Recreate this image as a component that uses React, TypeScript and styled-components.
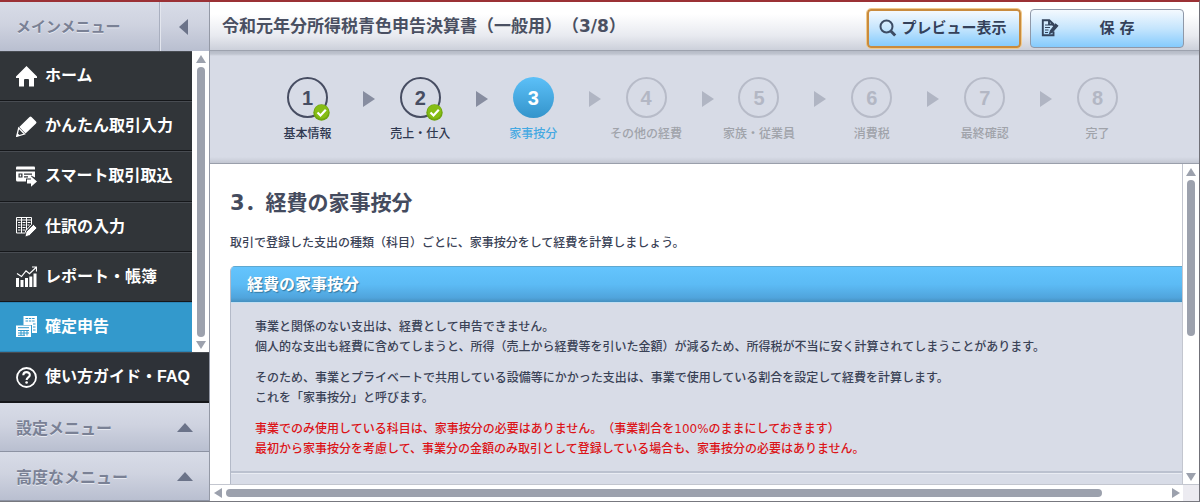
import React from "react";
import styled, { createGlobalStyle, css } from "styled-components";

const GlobalStyle = createGlobalStyle`
  *, *::before, *::after { box-sizing: border-box; }
  body {
    margin: 0;
    color: #3a4256;
    font-family: "DejaVu Sans", "Noto Sans CJK JP", sans-serif;
    font-size: 12px;
    font-weight: 500;
    text-spacing-trim: space-all;
  }
  h1, h2, h3, p, ul, ol { margin: 0; padding: 0; }
  ul, ol { list-style: none; }
  button { font-family: inherit; cursor: pointer; }
`;

const Page = styled.div`
  display: flex;
  height: 100vh;
  min-height: 480px;
  overflow: hidden;
  border-top: 2px solid #9b3135;
  border-right: 1px solid #707078;
  border-bottom: 1px solid #77787f;
`;

/* ---------- sidebar ---------- */

const Sidebar = styled.nav`
  display: flex;
  flex-direction: column;
  flex: none;
  width: 210px;
  border-right: 1px solid #9499a6;
`;

const silver = css`
  background: linear-gradient(#d8dce7, #cfd3e0 45%, #b9bfd0);
  color: #7a8195;
  font-family: "Noto Sans CJK JP", sans-serif;
  font-size: 16px;
  font-weight: 700;
  line-height: 24px;
  text-shadow: 0 1px 0 #e6e9f1;
`;

const SidebarHead = styled.div`
  ${silver}
  display: flex;
  flex: none;
  height: 49px;
`;

const SidebarTitle = styled.h2`
  display: flex;
  flex: 1;
  align-items: center;
  padding: 0 0 2px 16px;
  border-right: 1px solid #a9afbf;
  font-size: 15px;
`;

const CollapseButton = styled.button`
  display: flex;
  align-items: center;
  justify-content: center;
  width: 49px;
  padding: 0 4px 0 0;
  border: 0;
  border-left: 1px solid #e3e6ee;
  background: none;
`;

const MenuArea = styled.div`
  display: flex;
  flex: 1;
  min-height: 0;
`;

const MenuList = styled.ul`
  display: flex;
  flex: 1;
  flex-direction: column;
`;

const MenuItem = styled.li`
  display: flex;
  flex: 1;
`;

const MenuLink = styled.a<{ $active?: boolean; $tall?: boolean }>`
  display: flex;
  flex: 1;
  align-items: center;
  gap: 8px;
  padding-left: 16px;
  border-top: 1px solid ${(p) => (p.$active ? "#2c86b8" : "#484c52")};
  border-bottom: 1px solid ${(p) => (p.$active ? "#2b84b5" : "#15171a")};
  background: ${(p) => (p.$active ? "#3399cc" : p.$tall ? "#2e3238" : "#313539")};
  color: #fff;
  font-family: "Liberation Sans", "Noto Sans CJK JP", sans-serif;
  font-size: 16px;
  font-weight: 700;
  line-height: 24px;
  text-decoration: none;
  white-space: nowrap;
  ${(p) => p.$tall && "flex: none; height: 51px; border-bottom-width: 2px;"}
`;

const FoldButton = styled.button`
  ${silver}
  display: flex;
  flex: none;
  align-items: center;
  justify-content: space-between;
  height: 49px;
  padding: 0 16px;
  border: 0;
  border-bottom: 1px solid #8d93a3;
`;

/* ---------- scroll bars ---------- */

const VTrack = styled.div`
  display: flex;
  flex: none;
  flex-direction: column;
  align-items: center;
  gap: 4px;
  width: 17px;
  padding: 4px 0 3px;
  border-left: 1px solid #fff;
  background: #fff;
`;

const ContentVTrack = styled(VTrack)`
  border-left-color: #c3c6cf;
`;

const VRail = styled.div`
  flex: 1;
  width: 8px;
`;

const VThumb = styled.div<{ $share: number }>`
  height: ${(p) => p.$share}%;
  border-radius: 4px;
  background: #9ca1ad;
`;

const HTrack = styled.div`
  display: flex;
  flex: 1;
  align-items: center;
  gap: 4px;
  padding: 0 3px 0 4px;
  background: #fff;
`;

const HRail = styled.div`
  flex: 1;
`;

const HThumb = styled.div<{ $share: number }>`
  width: ${(p) => p.$share}%;
  height: 8px;
  border-radius: 4px;
  background: #9ca1ad;
`;

const HRow = styled.div`
  display: flex;
  flex: none;
  height: 17px;
  border-top: 1px solid #c3c6cf;
`;

const Corner = styled.div`
  width: 16px;
  background: #ecebf1;
`;

/* ---------- main column ---------- */

const Main = styled.main`
  display: flex;
  flex: 1;
  flex-direction: column;
  min-width: 0;
`;

const TitleBar = styled.header`
  display: flex;
  flex: none;
  align-items: center;
  justify-content: space-between;
  height: 49px;
  padding: 0 15px 0 12px;
  border-bottom: 1px solid #9da2ae;
  background: linear-gradient(#fff 25%, #e8eaf0 70%, #ccd0da);
`;

const PageTitle = styled.h1`
  color: #4a5062;
  font-size: 17px;
  font-weight: 700;
  line-height: 24px;
  white-space: nowrap;
`;

const Actions = styled.div`
  display: flex;
  align-items: center;
  gap: 9px;
  padding-top: 5px;
`;

const ActionButton = styled.button<{ $focus?: boolean }>`
  display: flex;
  align-items: center;
  width: 154px;
  height: 39px;
  padding: 0 10px 2px;
  border: 1px solid #8f98a8;
  border-radius: 4px;
  background: linear-gradient(#f4f9fe, #c5e5fd 50%, #85cbfd);
  color: #34415a;
  font-size: 15px;
  font-weight: 700;
  line-height: 20px;
  white-space: nowrap;
  ${(p) =>
    p.$focus &&
    css`
      border: 2px solid #c98b3d;
      outline: 1px solid #f0c98c;
    `}
`;

const ActionLabel = styled.span`
  flex: 1;
  padding-left: 2px;
  text-align: center;
`;

const Steps = styled.ol`
  display: flex;
  flex: none;
  align-items: flex-start;
  height: 113px;
  padding: 26px 56px 0 52px;
  border-bottom: 1px solid #9a9fab;
  background: linear-gradient(
    #b5bac6,
    #bfc4cf 3px,
    #d7dbe6 5px,
    #d7dbe6 106px,
    #c3c7d2
  );
`;

type StepState = "done" | "current" | "todo";
const labelColor = { done: "#2f3850", current: "#45a9e2", todo: "#a0a3aa" };

const Step = styled.li<{ $state: StepState }>`
  display: flex;
  flex: 1 1 0;
  flex-direction: column;
  align-items: center;
  gap: 7px;
  min-width: 76px;
  color: ${(p) => labelColor[p.$state]};
  line-height: 18px;
  white-space: nowrap;
`;

const StepCircle = styled.span<{ $state: StepState }>`
  position: relative;
  display: flex;
  align-items: center;
  justify-content: center;
  width: 41px;
  height: 41px;
  border: ${(p) => (p.$state === "current" ? "0" : "2px")} solid
    ${(p) => (p.$state === "done" ? "#474d62" : "#b7bbc8")};
  border-radius: 50%;
  background: ${(p) =>
    p.$state === "current" ? "linear-gradient(#5cc0f8, #3494cb)" : "none"};
  color: ${(p) =>
    p.$state === "current" ? "#fff" : p.$state === "done" ? "#474d62" : "#b3b7c4"};
  font-family: "Liberation Sans", sans-serif;
  font-size: 20px;
  font-weight: 700;
`;

const Badge = styled.svg`
  position: absolute;
  right: -4px;
  bottom: -5px;
`;

const StepArrow = styled.li`
  display: flex;
  flex: none;
  margin: 14px 0 0 10px;
`;

const ContentArea = styled.div`
  display: flex;
  flex: 1;
  min-height: 0;
`;

const Content = styled.section`
  flex: 1;
  min-width: 0;
  overflow: hidden;
  padding: 24px 0 0 20px;
  background: #fff;
`;

const Heading = styled.h2`
  color: #444b5e;
  font-size: 21px;
  font-weight: 700;
  line-height: 30px;
  white-space: nowrap;
`;

const Lead = styled.p`
  padding: 15px 0 13px;
  line-height: 20px;
  white-space: nowrap;
`;

const Panel = styled.section`
  border-left: 1px solid #b4bac8;
  border-radius: 5px 0 0 0;
  background: #d8dce7;
  overflow: hidden;
`;

const PanelTitle = styled.h3`
  height: 36px;
  padding-left: 16px;
  border-top: 1px solid #5fa8cf;
  background: linear-gradient(#64c4fd, #5cbbf5 50%, #50a4dc 88%, #4690bf);
  color: #fff;
  font-size: 16px;
  font-weight: 700;
  line-height: 36px;
  text-shadow: 1px 1px 1px #33779f;
`;

const PanelBody = styled.div`
  display: flex;
  flex-direction: column;
  gap: 11px;
  padding: 14px 0 12px 24px;
  border-top: 1px solid #c2dff2;
  border-bottom: 2px solid #bbc1cf;
  line-height: 20px;
  white-space: nowrap;
`;

const Warning = styled.p`
  color: #dc1418;
`;

const PanelRest = styled.div`
  height: 200px;
  border-top: 1px solid #e9ecf3;
`;

/* ---------- drawings ---------- */

const tri = {
  up: "M0 9 5 0l5 9z",
  down: "M0 0h10L5 9z",
  left: "M9 0v10L0 5z",
  right: "M0 0v10l9-5z",
};

const Tri = ({
  dir,
  w = 10,
  h = 8,
  fill = "#9ca1ad",
}: {
  dir: keyof typeof tri;
  w?: number;
  h?: number;
  fill?: string;
}) => {
  const upright = dir === "up" || dir === "down";
  return (
    <svg
      width={w}
      height={h}
      viewBox={upright ? "0 0 10 9" : "0 0 9 10"}
      preserveAspectRatio="none"
      aria-hidden="true"
    >
      <path d={tri[dir]} fill={fill} />
    </svg>
  );
};

const Icon = ({ children }: { children: React.ReactNode }) => (
  <svg width="21" height="21" viewBox="0 0 21 21" fill="#fff" aria-hidden="true">
    {children}
  </svg>
);

const HomeIcon = (
  <Icon>
    <path d="M10.500 0 21 10.500V12h-3v8.500h-5V14q0-1-1-1H9q-1 0-1 1v6.500H3V12H0v-1.500z" />
  </Icon>
);

const PencilIcon = (
  <Icon>
    <path d="M13.500 1q1-1 2 0L20 5.500q1 1 0 2L9.500 17.500 3.300 11z" />
    <path d="M2.700 12 8.500 18 .7 20.300z" fill="none" stroke="#fff" strokeWidth="1.300" />
    <path d="M1.300 17 4 19.600l-3.500 1z" />
  </Icon>
);

const CardIcon = (
  <Icon>
    <path d="M1 .5h17q1 0 1 1v2H0v-2q0-1 1-1z" />
    <path d="M0 5.500h19v6l-4-2v3h-5v3H1.500Q0 15.500 0 14z" />
    <path d="M2.500 7.500h4v4h-4zM8 7.500h8v1.200H8zM8 10.300h4v1.200H8z" fill="#313539" />
    <path d="M3.700 8.500h1.500v2H3.700z" />
    <path d="M11 13.500h4v-3.300l6 5.300-6 5.300v-3.300h-4z" />
  </Icon>
);

const LedgerIcon = (
  <Icon>
    <path
      d="M.5 1.500h15v7L9.500 15v2h-9zM.5 4h15M5.500 1v16M10.500 1v13"
      fill="none"
      stroke="#fff"
      strokeWidth="1"
    />
    <path
      d="M2 6.500h2.500M2 9h2.500M2 11.500h2.500M2 14h2.500M6.500 6.500h3M6.500 9h3M6.500 11.500h3M6.500 14h3M11.500 6.500h3M11.500 9h2"
      fill="none"
      stroke="#fff"
      strokeWidth="1.200"
    />
    <path d="m17.500 8.500 3.500 3.500-7.500 7.500L9 21l1-5z" stroke="#313539" strokeWidth=".8" />
  </Icon>
);

const ChartIcon = (
  <Icon>
    <path d="M0 12h3v9H0zM4.500 14h3v7h-3zM9 12h3v9H9zM13.300 10.500h3V21h-3zM17.500 7.500h3V21h-3z" />
    <path
      d="m1 7.500 4.500 3L10 4.800l3.500 3L20 1.500M16 1h4.500v4.500"
      fill="none"
      stroke="#fff"
      strokeWidth="1.200"
    />
  </Icon>
);

const TaxIcon = (
  <Icon>
    <path d="M7.500 0H21v17h-5V9H7.500z" />
    <path
      d="M9.500 2.500h9.500M9.500 5h9.500M17 8h2.500M17 11h2.500M17 14h2.500"
      stroke="#3399cc"
      strokeWidth="1.200"
      strokeDasharray="2.500 .8"
    />
    <path d="M0 9.500h15V21H0z" />
    <path
      d="M2 11.700h11M2 14.500h11M2 17h11M5 14v5.500M8 14v5.500M11 14v5.500M2 19.300h7"
      fill="none"
      stroke="#3399cc"
    />
  </Icon>
);

const HelpIcon = (
  <Icon>
    <circle cx="10.500" cy="10.500" r="9.500" fill="none" stroke="#fff" strokeWidth="1.800" />
    <path
      d="M7.300 8.300c0-4.300 6.500-4 6.500-.4 0 2.500-3.200 2.400-3.200 5"
      fill="none"
      stroke="#fff"
      strokeWidth="2.100"
    />
    <circle cx="10.600" cy="15.500" r="1.300" />
  </Icon>
);

const SearchIcon = () => (
  <svg width="18" height="18" viewBox="0 0 18 18" fill="none" stroke="#3c4c64" aria-hidden="true">
    <circle cx="7.500" cy="7.500" r="6" strokeWidth="2" />
    <path d="m11.800 12 4.400 4.500" strokeWidth="3" />
  </svg>
);

const SaveIcon = () => (
  <svg width="18" height="18" viewBox="0 0 18 18" fill="none" stroke="#34445c" aria-hidden="true">
    <path d="M12.500 12.500v3.700H1.800V1.200h6.500l4.200 4V7M8 1.500v4h4.500" strokeWidth="1.900" />
    <path d="M4 6h3M4 8.500h5M4 11h3.500M4 13.500h3" />
    <path d="m14.500 5-5 6.700-.8 2.600 2.500-1.100 5.500-6.400z" fill="#34445c" strokeWidth="1.200" />
  </svg>
);

const DoneBadge = () => (
  <Badge width="17" height="17" viewBox="0 0 17 17" role="img" aria-label="入力済み">
    <circle cx="8.500" cy="8.500" r="8.200" fill="#6fa510" />
    <circle cx="8.500" cy="7.800" r="7" fill="#86bd14" />
    <path d="m4.500 8.500 3 3 5.300-5.800" fill="none" stroke="#fff" strokeWidth="2.200" />
  </Badge>
);

/* ---------- data ---------- */

const menu = [
  { label: "ホーム", icon: HomeIcon },
  { label: "かんたん取引入力", icon: PencilIcon },
  { label: "スマート取引取込", icon: CardIcon },
  { label: "仕訳の入力", icon: LedgerIcon },
  { label: "レポート・帳簿", icon: ChartIcon },
  { label: "確定申告", icon: TaxIcon, active: true },
];

const steps: { label: string; state: StepState }[] = [
  { label: "基本情報", state: "done" },
  { label: "売上・仕入", state: "done" },
  { label: "家事按分", state: "current" },
  { label: "その他の経費", state: "todo" },
  { label: "家族・従業員", state: "todo" },
  { label: "消費税", state: "todo" },
  { label: "最終確認", state: "todo" },
  { label: "完了", state: "todo" },
];

export default function App() {
  return (
    <>
      <GlobalStyle />
      <Page>
        <Sidebar>
          <SidebarHead>
            <SidebarTitle>メインメニュー</SidebarTitle>
            <CollapseButton aria-label="メニューを閉じる">
              <Tri dir="left" w={9} h={16} fill="#6b7389" />
            </CollapseButton>
          </SidebarHead>
          <MenuArea>
            <MenuList>
              {menu.map((m) => (
                <MenuItem key={m.label}>
                  <MenuLink href="#" $active={m.active}>
                    {m.icon}
                    {m.label}
                  </MenuLink>
                </MenuItem>
              ))}
            </MenuList>
            <VTrack>
              <Tri dir="up" />
              <VRail>
                <VThumb $share={100} />
              </VRail>
              <Tri dir="down" />
            </VTrack>
          </MenuArea>
          <MenuLink href="#" $tall>
            {HelpIcon}
            使い方ガイド・FAQ
          </MenuLink>
          <FoldButton>
            設定メニュー
            <Tri dir="up" w={16} h={9} fill="#6b7389" />
          </FoldButton>
          <FoldButton>
            高度なメニュー
            <Tri dir="up" w={16} h={9} fill="#6b7389" />
          </FoldButton>
        </Sidebar>

        <Main>
          <TitleBar>
            <PageTitle>令和元年分所得税青色申告決算書（一般用）（3/8）</PageTitle>
            <Actions>
              <ActionButton $focus>
                <SearchIcon />
                <ActionLabel>プレビュー表示</ActionLabel>
              </ActionButton>
              <ActionButton>
                <SaveIcon />
                <ActionLabel>保 存</ActionLabel>
              </ActionButton>
            </Actions>
          </TitleBar>

          <Steps>
            {steps.map((s, i) => (
              <React.Fragment key={s.label}>
                {i > 0 && (
                  <StepArrow aria-hidden="true">
                    <Tri dir="right" w={12} h={16} fill={i < 3 ? "#878da0" : "#b0b5c3"} />
                  </StepArrow>
                )}
                <Step $state={s.state} aria-current={s.state === "current" ? "step" : undefined}>
                  <StepCircle $state={s.state}>
                    {i + 1}
                    {s.state === "done" && <DoneBadge />}
                  </StepCircle>
                  {s.label}
                </Step>
              </React.Fragment>
            ))}
          </Steps>

          <ContentArea>
            <Content>
              <Heading>3．経費の家事按分</Heading>
              <Lead>取引で登録した支出の種類（科目）ごとに、家事按分をして経費を計算しましょう。</Lead>
              <Panel>
                <PanelTitle>経費の家事按分</PanelTitle>
                <PanelBody>
                  <p>
                    事業と関係のない支出は、経費として申告できません。
                    <br />
                    個人的な支出も経費に含めてしまうと、所得（売上から経費等を引いた金額）が減るため、所得税が不当に安く計算されてしまうことがあります。
                  </p>
                  <p>
                    そのため、事業とプライベートで共用している設備等にかかった支出は、事業で使用している割合を設定して経費を計算します。
                    <br />
                    これを「家事按分」と呼びます。
                  </p>
                  <Warning>
                    事業でのみ使用している科目は、家事按分の必要はありません。（事業割合を100%のままにしておきます）
                    <br />
                    最初から家事按分を考慮して、事業分の金額のみ取引として登録している場合も、家事按分の必要はありません。
                  </Warning>
                </PanelBody>
                <PanelRest />
              </Panel>
            </Content>
            <ContentVTrack>
              <Tri dir="up" />
              <VRail>
                <VThumb $share={54} />
              </VRail>
              <Tri dir="down" />
            </ContentVTrack>
          </ContentArea>
          <HRow>
            <HTrack>
              <Tri dir="left" w={8} h={10} />
              <HRail>
                <HThumb $share={93} />
              </HRail>
              <Tri dir="right" w={8} h={10} />
            </HTrack>
            <Corner />
          </HRow>
        </Main>
      </Page>
    </>
  );
}
